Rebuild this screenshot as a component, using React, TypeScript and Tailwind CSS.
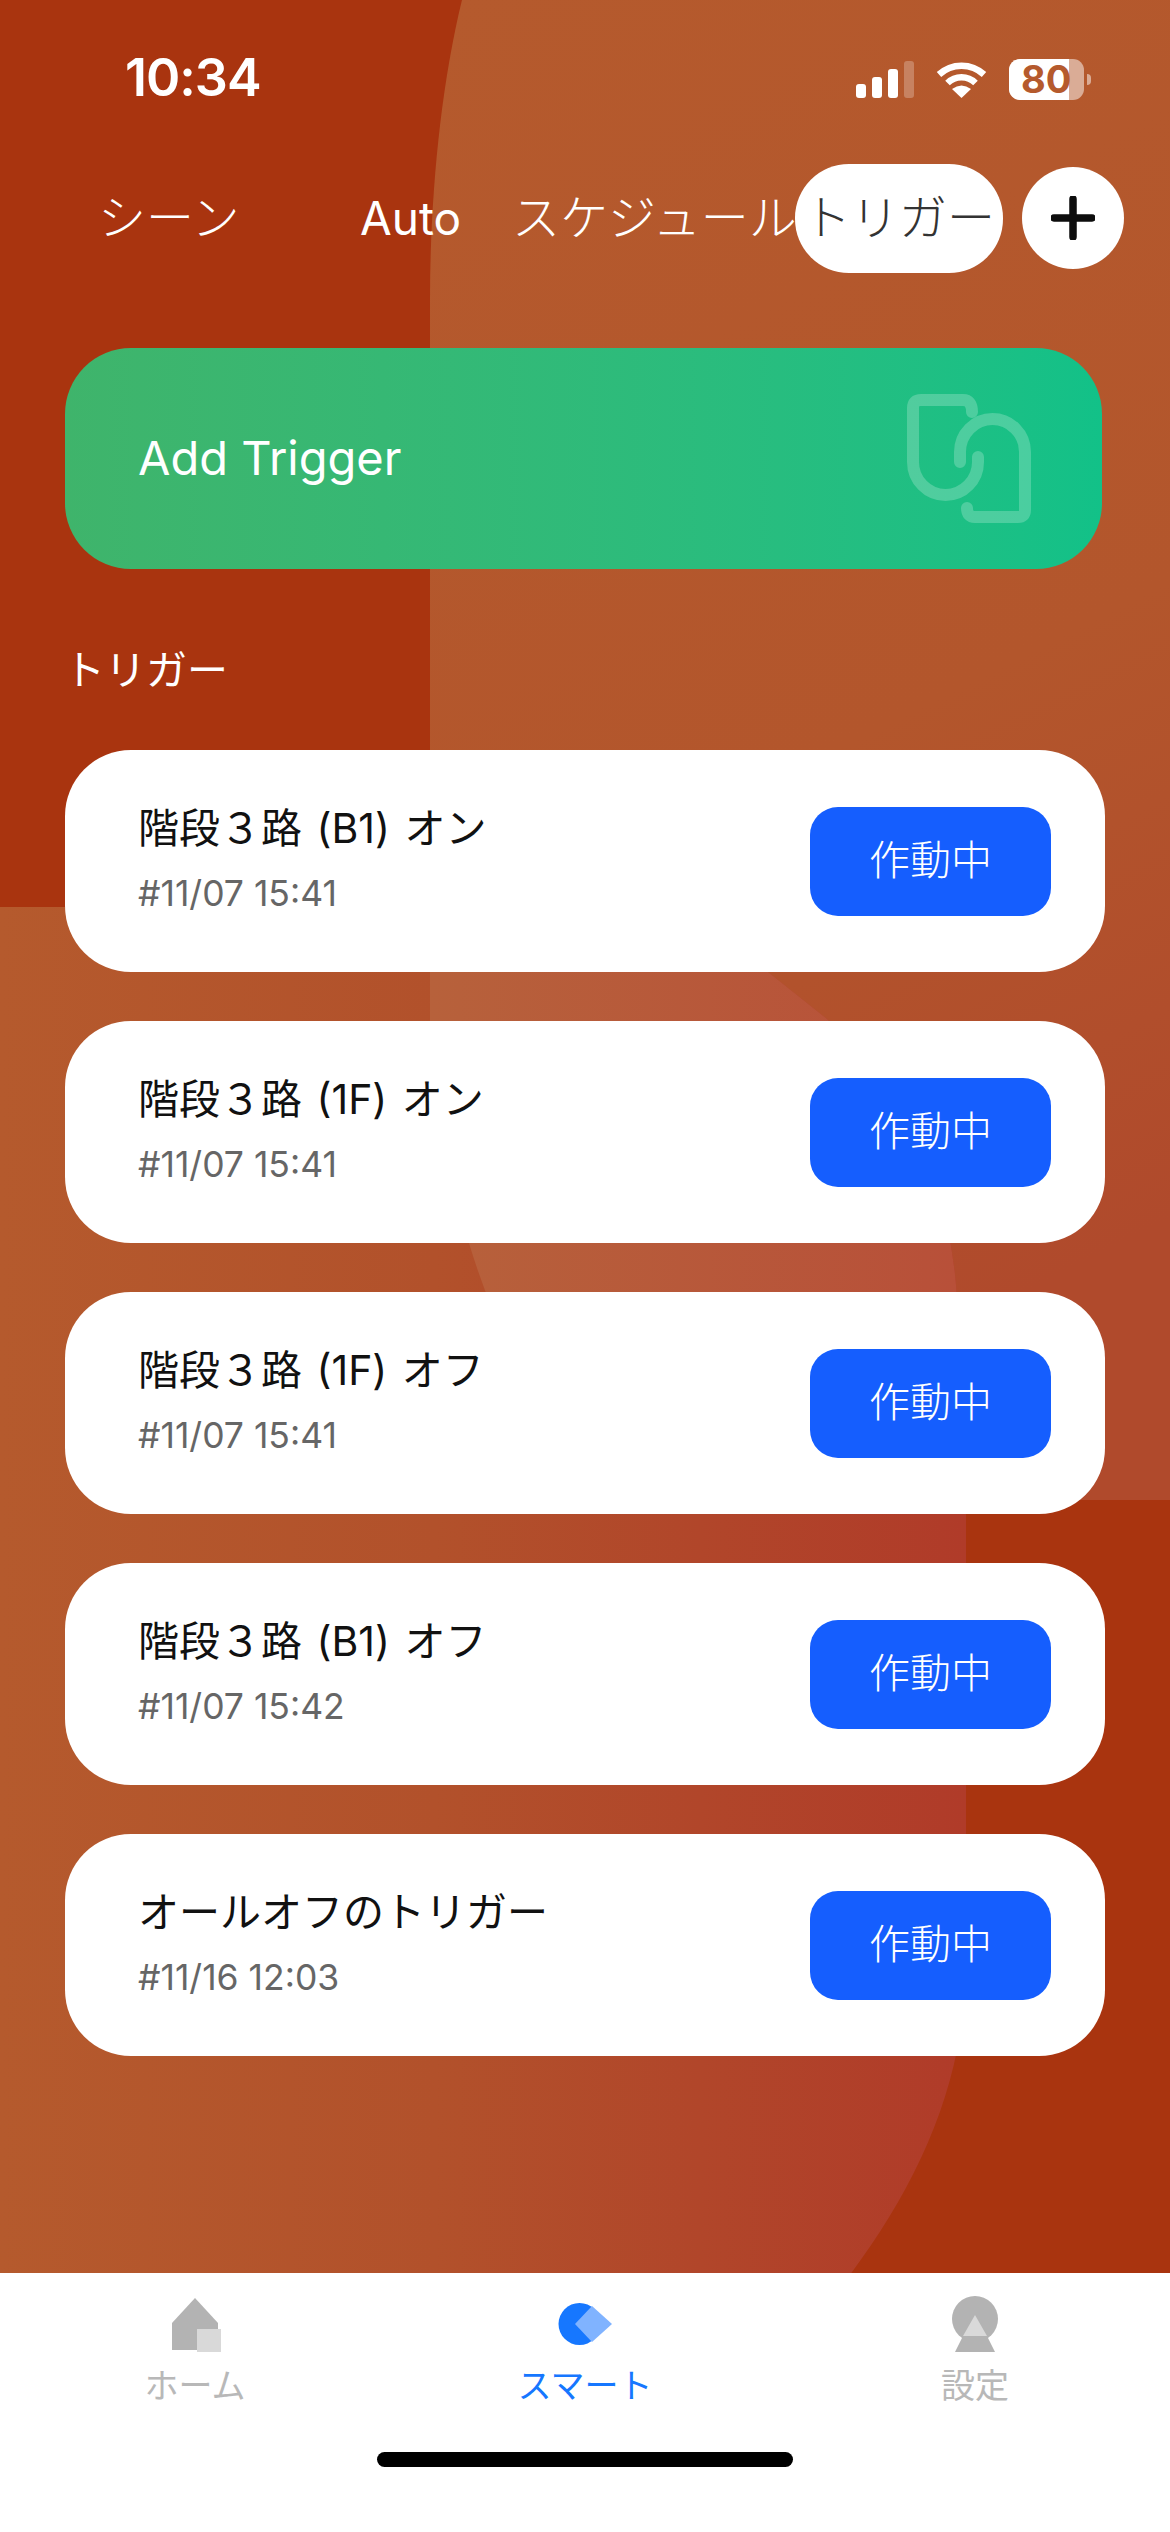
const triggers = [
  { name: '階段３路 (B1) オン', time: '#11/07 15:41' },
  { name: '階段３路 (1F) オン', time: '#11/07 15:41' },
  { name: '階段３路 (1F) オフ', time: '#11/07 15:41' },
  { name: '階段３路 (B1) オフ', time: '#11/07 15:42' },
  { name: 'オールオフのトリガー', time: '#11/16 12:03' },
];

// Wallpaper shapes behind the page
function Wallpaper() {
  return (
    <svg className="absolute inset-0" width="1170" height="2532" viewBox="0 0 1170 2532">
      <defs>
        <linearGradient id="upper" x1="0" y1="0" x2="0.25" y2="1">
          <stop offset="0" stopColor="#b55a2d" />
          <stop offset="0.6" stopColor="#b3562c" />
          <stop offset="1" stopColor="#b04a2c" />
        </linearGradient>
        <linearGradient id="lower" gradientUnits="userSpaceOnUse" x1="0" y1="0" x2="966" y2="0">
          <stop offset="0" stopColor="#b55a2d" />
          <stop offset="0.45" stopColor="#b2512b" />
          <stop offset="1" stopColor="#b03b29" />
        </linearGradient>
        <linearGradient id="blob" gradientUnits="userSpaceOnUse" x1="430" y1="0" x2="957" y2="0">
          <stop offset="0" stopColor="#b7613b" />
          <stop offset="1" stopColor="#b85039" />
        </linearGradient>
      </defs>
      <rect width="1170" height="2532" fill="#a9340f" />
      <path d="M462 0C440 90 430 200 430 300L430 1500L1170 1500L1170 0Z" fill="url(#upper)" />
      <path
        d="M0 907L680 907L768 972L827 1019C900 1090 950 1170 957 1300L966 1500L966 1960C966 2080 920 2180 852 2272L820 2320L0 2320Z"
        fill="url(#lower)"
      />
      <path
        d="M430 907L680 907L768 972L827 1019C900 1090 950 1170 957 1300C950 1420 830 1510 700 1510C590 1500 510 1380 469 1243C450 1170 430 1100 430 1030Z"
        fill="url(#blob)"
      />
    </svg>
  );
}

function StatusBar() {
  return (
    <div className="flex h-[163px] items-start pl-[125px] pt-[50px] text-white">
      <span className="w-[133px] text-[52px] leading-[56px] font-semibold tracking-[-1px] whitespace-nowrap">10:34</span>
      <div className="ml-[598px] flex items-end pt-[9px]">
        <div className="flex items-end gap-[6px]">
          <span className="h-[14px] w-[10px] rounded-[3px] bg-white" />
          <span className="h-[21px] w-[10px] rounded-[3px] bg-white" />
          <span className="h-[29px] w-[10px] rounded-[3px] bg-white" />
          <span className="h-[37px] w-[10px] rounded-[3px] bg-white/25" />
        </div>
        <svg className="ml-[22px]" width="51" height="37" viewBox="0 0 51 37">
          <path d="M3 13.5A33 33 0 0 1 48 13.5" fill="none" stroke="#fff" strokeWidth="6.5" />
          <path d="M11.5 22A20 20 0 0 1 39.5 22" fill="none" stroke="#fff" strokeWidth="6.5" />
          <path d="M25.5 37L16 28Q25.5 21 35 28Z" fill="#fff" />
        </svg>
        <div className="mb-[-2px] ml-[22px] flex items-center">
          <div className="relative h-[41px] w-[75px] rounded-[11px] bg-white/50">
            <div className="h-full w-[60px] rounded-l-[11px] bg-white" />
            <span className="absolute top-0 left-[12px] text-[38px] leading-[41px] font-bold text-[#b55a2d]">80</span>
          </div>
          <span className="ml-[3px] h-[11px] w-[4px] rounded-r-full bg-white/50" />
        </div>
      </div>
    </div>
  );
}

function TabRow() {
  return (
    <div className="flex h-[110px] items-center pl-[98px] text-[48px] font-light text-white">
      <span className="w-[138px] whitespace-nowrap">シーン</span>
      <span className="ml-[124px] w-[100px] text-[46px] font-normal whitespace-nowrap">Auto</span>
      <span className="ml-[52px] w-[283px] whitespace-nowrap">スケジュール</span>
      <span className="flex h-[109px] w-[208px] items-center justify-center rounded-[54px] bg-white whitespace-nowrap text-[#333333]">
        トリガー
      </span>
      <span className="ml-[19px] flex h-[102px] w-[102px] items-center justify-center rounded-full bg-white">
        <svg width="44" height="44" viewBox="0 0 44 44">
          <path d="M22 3V41M3 22H41" stroke="#0d0d0d" strokeWidth="7.5" strokeLinecap="round" />
        </svg>
      </span>
    </div>
  );
}

function AddTriggerCard() {
  return (
    <div className="mt-[75px] ml-[65px] flex h-[221px] w-[1037px] items-center justify-between rounded-[66px] bg-gradient-to-r from-[#3fb46b] to-[#12c188] pr-[70px] pl-[73px]">
      <span className="text-[47px] text-white">Add Trigger</span>
      <svg width="127" height="133" viewBox="0 0 127 133" fill="none" stroke="#ffffff" strokeOpacity="0.22" strokeWidth="12" strokeLinecap="round">
        <path d="M67 20Q67 8 58 8L16 8Q8 8 8 16L8 70A32.5 33 0 0 0 73 70L73 65" />
        <path d="M55 70L55 60A32.5 33 0 0 1 120 60L120 118Q120 125 113 125L70 125Q62 125 62 116" />
      </svg>
    </div>
  );
}

function TriggerCard({ name, time }: { name: string; time: string }) {
  return (
    <div className="flex h-[222px] w-[1040px] items-center justify-between rounded-[66px] bg-white pr-[54px] pl-[73px]">
      <div className="flex flex-col pb-[6px]">
        <span className="text-[41px] leading-[58px] [word-spacing:3px] text-[#111111]">{name}</span>
        <span className="mt-[14px] text-[35.5px] leading-[46px] text-[#666666]">{time}</span>
      </div>
      <button className="flex h-[109px] w-[241px] items-center justify-center rounded-[28px] bg-[#155efe] text-[41px] font-light text-white">
        作動中
      </button>
    </div>
  );
}

function BottomTabs() {
  return (
    <div className="relative flex h-[259px] flex-col bg-white">
      <div className="grid grid-cols-3 pt-[22px]">
        <div className="flex flex-col items-center">
          <svg width="60" height="60" viewBox="0 0 60 60">
            <path d="M7 28L30 3L53 28L53 55L7 55Z" fill="#b3b3b3" />
            <rect x="32" y="34" width="24" height="23" fill="#d9d9d9" />
          </svg>
          <span className="mt-[8px] text-[34px] leading-[46px] text-[#b8b8b8]">ホーム</span>
        </div>
        <div className="flex flex-col items-center">
          <svg width="60" height="60" viewBox="0 0 60 60">
            <circle cx="24.5" cy="29" r="21" fill="#1677ff" />
            <path d="M20 29L37 11L57 29L37 47Z" fill="#80b3ff" />
          </svg>
          <span className="mt-[8px] text-[34px] leading-[46px] text-[#1677ff]">スマート</span>
        </div>
        <div className="flex flex-col items-center">
          <svg width="60" height="60" viewBox="0 0 60 60">
            <ellipse cx="30" cy="24" rx="23" ry="23" fill="#b3b3b3" />
            <path d="M18 41L42 41L50 57L10 57Z" fill="#b3b3b3" />
            <path d="M30 20L18 41L42 41Z" fill="#d9d9d9" />
          </svg>
          <span className="mt-[8px] text-[34px] leading-[46px] text-[#b8b8b8]">設定</span>
        </div>
      </div>
      <div className="mx-auto mt-[43px] h-[15px] w-[416px] rounded-full bg-black" />
    </div>
  );
}

export default function App() {
  return (
    <div
      lang="ja"
      className="relative flex h-[2532px] w-[1170px] flex-col overflow-hidden font-['Inter','Noto_Sans_CJK_JP',sans-serif]"
    >
      <Wallpaper />
      <div className="relative flex flex-1 flex-col">
        <StatusBar />
        <TabRow />
        <AddTriggerCard />
        <p className="mt-[72px] ml-[64px] text-[41px] leading-[58px] text-white">トリガー</p>
        <div className="mt-[51px] ml-[65px] flex flex-col gap-[49px]">
          {triggers.map((t) => (
            <TriggerCard key={t.name} name={t.name} time={t.time} />
          ))}
        </div>
      </div>
      <BottomTabs />
    </div>
  );
}
